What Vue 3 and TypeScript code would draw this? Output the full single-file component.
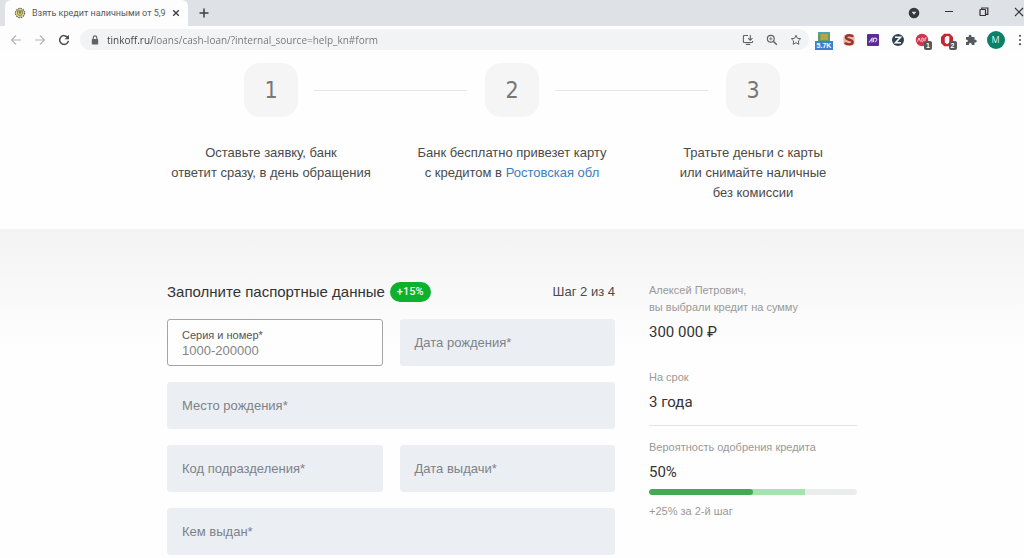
<script setup lang="ts">
import { ref } from 'vue'

interface Field {
  id: string
  label: string
  wide?: boolean
  placeholder?: string
}

const address = ref('tinkoff.ru/loans/cash-loan/?internal_source=help_kn#form')

const fields: Field[] = [
  { id: 'passport', label: 'Серия и номер*', placeholder: '1000-200000' },
  { id: 'birth-date', label: 'Дата рождения*' },
  { id: 'birth-place', label: 'Место рождения*', wide: true },
  { id: 'division', label: 'Код подразделения*' },
  { id: 'issue-date', label: 'Дата выдачи*' },
  { id: 'issuer', label: 'Кем выдан*', wide: true },
]

const values = ref<Record<string, string>>({})
const current = 50
const next = 75
</script>

<template>
  <div class="window">
    <header class="browser">
      <div class="tabs">
        <div class="tab">
          <svg class="favicon" viewBox="0 0 12 12" aria-hidden="true">
            <circle cx="6" cy="6" r="4.6" fill="#e4e0a8" stroke="#6b6b5c" stroke-width="1.3" stroke-dasharray="1.6 .8" />
            <path d="M3.6 3.8h4.800v2.400c0 1.400-1 2.200-2.400 2.800-1.400-.6-2.400-1.400-2.400-2.800z" fill="#e8dc50" stroke="#55543c" stroke-width=".7" />
            <path d="M4.800 5h2.400M6 5v2.400" stroke="#444" stroke-width=".8" />
          </svg>
          <span class="tab-title">Взять кредит наличными от 5,9</span>
          <button class="icon-btn tab-close" aria-label="Закрыть вкладку">
            <svg viewBox="0 0 8 8"><path d="M1.200 1.200l5.600 5.600M6.800 1.200L1.200 6.800" stroke="#3c4043" stroke-width="1.400" /></svg>
          </button>
        </div>
        <button class="icon-btn new-tab" aria-label="Новая вкладка">
          <svg viewBox="0 0 10 10"><path d="M5 .5v9M.5 5h9" stroke="#3c4043" stroke-width="1.500" /></svg>
        </button>
        <div class="controls">
          <button class="icon-btn" aria-label="Поиск вкладок">
            <svg viewBox="0 0 12 12"><circle cx="6" cy="6" r="5.300" fill="#35383c" /><path d="M3.600 4.800h4.800L6 7.800z" fill="#dee1e6" /></svg>
          </button>
          <button class="icon-btn" aria-label="Свернуть">
            <svg viewBox="0 0 12 12"><path d="M2 4.500h8" stroke="#333" /></svg>
          </button>
          <button class="icon-btn" aria-label="Восстановить">
            <svg viewBox="0 0 12 12" fill="none" stroke="#333" stroke-width="1.200"><rect x="2" y="2.500" width="5.500" height="6" rx=".6" /><path d="M3.800 2.300V1h6v6.400H7.800" /></svg>
          </button>
          <button class="icon-btn" aria-label="Закрыть">
            <svg viewBox="0 0 12 12"><path d="M2 1l8 8M10 1L2 9" stroke="#333" stroke-width="1.100" /></svg>
          </button>
        </div>
      </div>

      <div class="toolbar">
        <nav class="history">
          <button class="icon-btn" aria-label="Назад">
            <svg viewBox="0 0 12 12" fill="none" stroke="#b3b6b9" stroke-width="1.200"><path d="M11 6H1.500M6 1.500L1.500 6 6 10.500" /></svg>
          </button>
          <button class="icon-btn" aria-label="Вперёд">
            <svg viewBox="0 0 12 12" fill="none" stroke="#b3b6b9" stroke-width="1.200"><path d="M1 6h9.500M6 1.500L10.500 6 6 10.500" /></svg>
          </button>
          <button class="icon-btn" aria-label="Обновить">
            <svg viewBox="0 0 12 12"><path d="M9.600 3.400A4.400 4.400 0 1 0 10.400 6.800" fill="none" stroke="#4b4e52" stroke-width="1.500" /><path d="M11 .8v4.400H6.600z" fill="#4b4e52" /></svg>
          </button>
        </nav>
        <div class="omnibox">
          <svg class="lock" viewBox="0 0 8 10" aria-hidden="true"><rect x=".8" y="4" width="6.400" height="5.400" rx=".7" fill="#5f6368" /><path d="M2.200 4.200V2.700a1.800 1.800 0 0 1 3.600 0v1.500" fill="none" stroke="#5f6368" stroke-width="1.100" /></svg>
          <input v-model="address" class="address" type="text" aria-label="Адресная строка" />
          <button class="icon-btn" aria-label="Установить приложение">
            <svg viewBox="0 0 12 12" fill="none" stroke="#5f6368" stroke-width="1.100"><path d="M6 1.500H2.200a.8.8 0 0 0-.8.8v5.400a.8.8 0 0 0 .8.8h7.600a.8.8 0 0 0 .8-.8V7M3.800 10.400h4.400M8.300 1v5M6.200 4.200l2.100 2.100 2.100-2.100" /></svg>
          </button>
          <button class="icon-btn" aria-label="Масштаб">
            <svg viewBox="0 0 12 12" fill="none" stroke="#5f6368" stroke-width="1.200"><circle cx="4.800" cy="4.800" r="3.400" /><path d="M7.300 7.300l3.500 3.500" stroke-width="1.500" /><path d="M3.200 4.800h3.200M4.800 3.200v3.200" stroke-width=".8" /></svg>
          </button>
          <button class="icon-btn" aria-label="Добавить в закладки">
            <svg viewBox="0 0 12 12"><path d="M6 1.300l1.400 3 3.300.4-2.400 2.300.6 3.300L6 8.700l-2.900 1.600.6-3.300L1.300 4.700l3.300-.4z" fill="none" stroke="#5f6368" stroke-width="1" /></svg>
          </button>
        </div>
        <div class="extensions">
          <button class="icon-btn ext" aria-label="Счётчик">
            <svg viewBox="0 0 18 18"><rect x="3" y="1" width="12" height="9" fill="#5f9c6b" /><rect x="5.500" y="3" width="7.500" height="6" fill="#b5a642" /><path d="M3 1h12v2H3z" fill="#4da3b5" /></svg>
            <span class="count">5.7K</span>
          </button>
          <button class="icon-btn ext" aria-label="Расширение S">
            <svg viewBox="0 0 18 18"><rect x="3.500" y="3.500" width="11" height="11" rx="3" fill="#e5b6a7" /><path d="M13 5.800C12 3.800 6 3.500 6 6.500c0 2.800 6.600 1.700 6.600 4.600 0 3-6.200 2.900-7.600.6" fill="none" stroke="#9b3327" stroke-width="2.400" /></svg>
          </button>
          <button class="icon-btn ext" aria-label="Расширение с волной">
            <svg viewBox="0 0 18 18"><rect x="3" y="3" width="12" height="12" rx="1" fill="#5b2a9c" /><path d="M5 11.500l3-4v4M9.500 11V7.500c3-1 4 .5 3 2l-1.500 1.700" fill="none" stroke="#e3d8f3" stroke-width="1.100" /></svg>
          </button>
          <button class="icon-btn ext" aria-label="Расширение Z">
            <svg viewBox="0 0 18 18"><circle cx="9" cy="9" r="6" fill="#2f4254" /><path d="M6 6.200h5.500L6.500 11.800H12" fill="none" stroke="#fff" stroke-width="1.600" /></svg>
          </button>
          <button class="icon-btn ext" aria-label="Блокировщик">
            <svg viewBox="0 0 18 18"><circle cx="9" cy="9" r="6.200" fill="#d0344f" /><path d="M4.500 10.500L6 7l1.500 3.500M8.800 7v3.500h1c1.300 0 1.300-3.500 0-3.500zM12 10.500V7h1.500" fill="none" stroke="#f8c9d2" stroke-width="1" /></svg>
            <span class="badge">1</span>
          </button>
          <button class="icon-btn ext" aria-label="Стоп-расширение">
            <svg viewBox="0 0 18 18"><path d="M6.200 2.800h5.600L15 6v6l-3.200 3.200H6.200L3 12V6z" fill="#c4262b" /><path d="M6.800 6.500v5l2.200 1.700 2.300-1.700v-6L9 4.800z" fill="#fff" /></svg>
            <span class="badge">2</span>
          </button>
          <button class="icon-btn ext" aria-label="Расширения">
            <svg viewBox="0 0 18 18"><path d="M4 6h2.800c-.9-3 3.400-3 2.700 0h3v2.800c3-.8 3 3.300 0 2.600V14H9.700c.5-2.600-3.200-2.600-2.700 0H4v-3c2.500.4 2.500-2.700 0-2.300z" fill="#55585c" /></svg>
          </button>
          <button class="avatar" aria-label="Профиль М">M</button>
          <button class="icon-btn ext" aria-label="Меню">
            <svg viewBox="0 0 18 18" fill="#55585c"><circle cx="9" cy="4.800" r="1.100" /><circle cx="9" cy="9" r="1.100" /><circle cx="9" cy="13.200" r="1.100" /></svg>
          </button>
        </div>
      </div>
    </header>

    <main>
      <ol class="steps">
        <li class="step">
          <span class="step-number">1</span>
          <p>Оставьте заявку, банк<br />ответит сразу, в день обращения</p>
        </li>
        <li class="step">
          <span class="step-number">2</span>
          <p>Банк бесплатно привезет карту<br />с кредитом в <a href="#region">Ростовская обл</a></p>
        </li>
        <li class="step">
          <span class="step-number">3</span>
          <p>Тратьте деньги с карты<br />или снимайте наличные<br />без комиссии</p>
        </li>
      </ol>

      <section class="application">
        <div class="columns">
          <form class="form" @submit.prevent>
            <div class="form-head">
              <h2>Заполните паспортные данные</h2>
              <span class="bonus">+15%</span>
              <span class="progress-text">Шаг 2 из 4</span>
            </div>
            <div class="fields">
              <div
                v-for="field in fields"
                :key="field.id"
                class="field"
                :class="{ wide: field.wide, active: field.placeholder }"
              >
                <label :for="field.id">{{ field.label }}</label>
                <input :id="field.id" v-model="values[field.id]" type="text" :placeholder="field.placeholder" />
              </div>
            </div>
          </form>

          <aside class="summary">
            <p class="note">Алексей Петрович,<br />вы выбрали кредит на сумму</p>
            <p class="value amount">300 000 ₽</p>
            <p class="note">На срок</p>
            <p class="value term">3 года</p>
            <p class="note chance">Вероятность одобрения кредита</p>
            <p class="value">50%</p>
            <div class="bar" role="progressbar" :aria-valuenow="current" aria-valuemin="0" aria-valuemax="100" aria-label="Вероятность одобрения кредита">
              <div class="bar-next" :style="{ width: next + '%' }"></div>
              <div class="bar-now" :style="{ width: current + '%' }"></div>
            </div>
            <p class="note">+25% за 2-й шаг</p>
          </aside>
        </div>
      </section>
    </main>
  </div>
</template>

<style>
body {
  margin: 0;
  background: #fefefe;
}
</style>

<style scoped>
.window {
  overflow-x: hidden;
  color: #4a4a4a;
  font-family: "Liberation Sans", Arial, sans-serif;
  font-size: 13px;
  line-height: 20px;
}

p,
h2,
ol {
  margin: 0;
  padding: 0;
}

.icon-btn {
  display: flex;
  flex: none;
  align-items: center;
  justify-content: center;
  padding: 0;
  border: 0;
  background: none;
}

.icon-btn svg {
  width: 12px;
  height: 12px;
}

/* Browser window */
.browser {
  font-family: "Open Sans", "Noto Sans", sans-serif;
}

.tabs {
  display: flex;
  align-items: center;
  height: 26px;
  padding-left: 5px;
  background: #dee1e6;
}

.tab {
  display: flex;
  align-items: center;
  box-sizing: border-box;
  width: 183px;
  height: 26px;
  padding: 0 8px 0 9px;
  border-radius: 6px 6px 0 0;
  background: #fdfdfe;
}

.favicon {
  flex: none;
  width: 12px;
  height: 12px;
}

.tab-title {
  flex: 1;
  margin-left: 6px;
  color: #55585c;
  font-family: Roboto, sans-serif;
  font-size: 9px;
  white-space: nowrap;
}

.icon-btn.tab-close svg {
  width: 8px;
  height: 8px;
}

.new-tab {
  margin-left: 11px;
}

.icon-btn.new-tab svg {
  width: 10px;
  height: 10px;
}

.controls {
  display: flex;
  gap: 23px;
  margin-left: auto;
  margin-right: -1px;
}

.toolbar {
  display: flex;
  align-items: center;
  height: 27px;
  background: #fdfdfe;
}

.history {
  display: flex;
  gap: 12px;
  padding: 0 10px;
}

.omnibox {
  display: flex;
  flex: 1;
  align-items: center;
  gap: 12px;
  height: 21px;
  padding: 0 7px 0 11px;
  border-radius: 11px;
  background: #f1f3f4;
}

.lock {
  flex: none;
  width: 8px;
  height: 10px;
}

.address {
  flex: 1;
  min-width: 0;
  margin-left: -4px;
  padding: 0;
  border: 0;
  outline: 0;
  background: linear-gradient(90deg, #3c4043 46px, #70757a 46px);
  background-clip: text;
  color: transparent;
  font: 10px/20px "Open Sans", "Noto Sans", sans-serif;
}

.extensions {
  display: flex;
  flex: none;
  align-items: center;
  justify-content: space-between;
  width: 214px;
  margin: 0 -5px 0 6px;
}

.ext {
  position: relative;
  width: 18px;
}

.icon-btn.ext svg {
  width: 18px;
  height: 18px;
}

.count,
.badge {
  position: absolute;
  color: #fff;
  font-weight: 700;
  font-size: 7px;
  line-height: 9px;
}

.count {
  right: 0;
  bottom: -1px;
  left: 0;
  background: #3f7fd0;
}

.badge {
  right: -1px;
  bottom: -1px;
  width: 8px;
  border-radius: 2px;
  background: #54575b;
}

.avatar {
  width: 18px;
  height: 18px;
  padding: 0;
  border: 0;
  border-radius: 50%;
  background: #0b7f68;
  color: #d9f0ea;
  font: 9px/18px "Open Sans", sans-serif;
}

/* Steps */
.steps {
  display: grid;
  grid-template-columns: repeat(3, 1fr);
  max-width: 723px;
  margin: 0 auto;
  padding: 10px 0 26px;
  list-style: none;
  text-align: center;
}

.step {
  position: relative;
}

.step:not(:last-child)::after {
  content: "";
  position: absolute;
  top: 27px;
  right: -75px;
  width: 153px;
  height: 1px;
  background: #e6e6e6;
}

.step-number {
  display: block;
  width: 54px;
  margin: 0 auto 26px;
  border-radius: 16px;
  background: #f5f5f5;
  color: #777;
  font-family: "DejaVu Sans Condensed", "DejaVu Sans", sans-serif;
  font-size: 23px;
  line-height: 54px;
}

a {
  color: #3d7dbd;
  text-decoration: none;
}

/* Application */
.application {
  padding: 53px 24px 0;
  background: linear-gradient(#f3f3f3, #fefefe 120px);
}

.columns {
  display: grid;
  grid-template-columns: 448fr 208fr;
  gap: 34px;
  max-width: 690px;
  margin: 0 auto;
}

.form-head {
  display: flex;
  align-items: center;
  margin-bottom: 17px;
}

h2 {
  color: #333;
  font-weight: 400;
  font-size: 15px;
}

.bonus {
  margin-left: 5px;
  padding: 0 7px;
  border-radius: 10px;
  background: #10b02f;
  color: #e8fbe9;
  font-family: Roboto, sans-serif;
  font-weight: 500;
  font-size: 11px;
}

.progress-text {
  margin-left: auto;
}

.fields {
  display: grid;
  grid-template-columns: 1fr 1fr;
  gap: 16px 17px;
}

.field {
  display: grid;
  align-items: center;
  box-sizing: border-box;
  height: 47px;
  border: 1px solid #ebeff4;
  border-radius: 3px;
  background: #ebeff4;
}

.field label,
.field input {
  grid-area: 1 / 1;
  padding: 0 14px;
}

.field label {
  color: #7d8288;
}

.field input {
  min-width: 0;
  height: 100%;
  box-sizing: border-box;
  border: 0;
  outline: 0;
  background: none;
  color: #444;
  font: inherit;
}

.field.active {
  align-content: center;
  border-color: #a5a5a5;
  background: #fefefe;
}

.field.active label {
  color: #555;
  font-size: 11px;
  line-height: 16px;
}

.field.active input {
  grid-area: 2 / 1;
  height: 16px;
}

.field.active input::placeholder {
  color: #858585;
}

.wide {
  grid-column: 1 / -1;
}

.note {
  color: #999;
  font-size: 11px;
  line-height: 17px;
}

.value {
  margin-top: 6px;
  color: #333;
  font-family: Roboto, sans-serif;
  font-size: 15px;
}

.amount {
  margin-bottom: 27px;
}

.term {
  padding-bottom: 13px;
  border-bottom: 1px solid #e4e4e4;
}

.chance {
  margin-top: 13px;
}

.bar {
  display: grid;
  overflow: hidden;
  height: 6px;
  margin: 7px 0 8px;
  border-radius: 3px;
  background: #ebecec;
}

.bar > div {
  grid-area: 1 / 1;
}

.bar-next {
  background: #a5e3b1;
}

.bar-now {
  border-radius: 3px;
  background: #45a854;
}
</style>
